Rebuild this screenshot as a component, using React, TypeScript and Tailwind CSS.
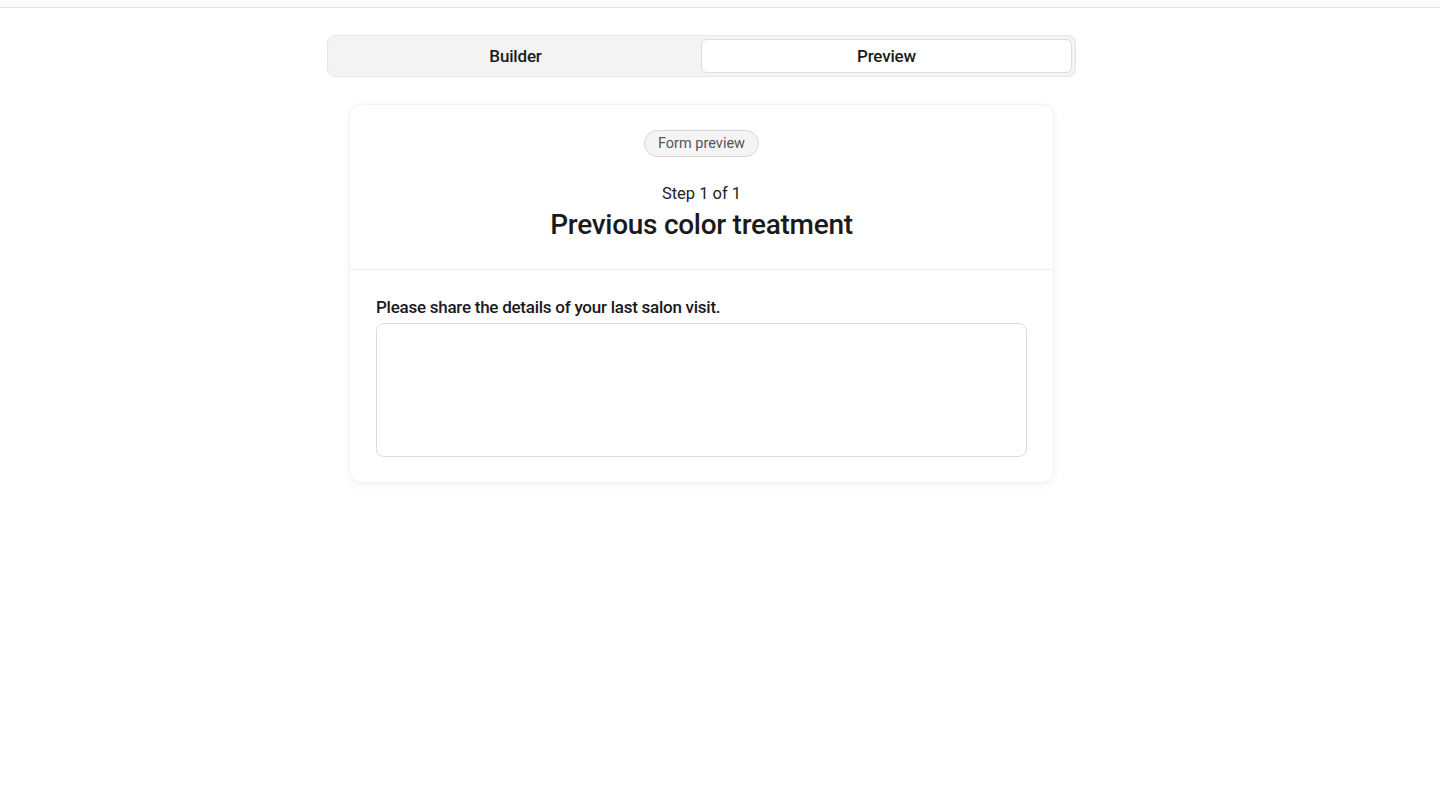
export default function App() {
  return (
    <div className="min-h-screen bg-white text-[#1a1a1a]" style={{ fontFamily: 'Roboto, "Liberation Sans", sans-serif' }}>
      <div className="h-[8px] border-b border-[#e4e4e4] bg-[#fbfbfb]" />
      <div className="pr-[37px]">
        <div className="mx-auto w-[749px] pt-[27px]">
          {/* Tabs */}
          <div className="flex h-[42px] gap-[1px] rounded-lg border border-[#e6e6e6] bg-[#f3f3f3] p-[3px]">
            <button className="flex-1 rounded-md pt-[1px] text-[17px] font-medium tracking-[-0.01em] text-[#1a1a1a]">Builder</button>
            <button className="flex-1 rounded-md border border-[#dedede] bg-white pt-[1px] text-[17px] font-medium tracking-[-0.01em] text-[#1a1a1a]">Preview</button>
          </div>

          {/* Form card */}
          <div className="mx-auto mt-[27px] w-[705px] rounded-xl border border-[#f3f3f3] bg-white shadow-[0_2px_8px_rgba(0,0,0,0.06)]">
            <div className="flex flex-col items-center border-b border-[#ececec] pb-[26px] pt-[25px]">
              <span className="flex h-[27px] items-center rounded-full border border-[#d6d6d6] bg-[#f4f4f4] px-[13px] text-[14.5px] text-[#555]">Form preview</span>
              <div className="mt-[25px] text-[16.5px] leading-[24px] text-[#222]">Step 1 of 1</div>
              <h1 className="mt-[1px] text-[28px] font-medium leading-[36px] tracking-[-0.01em] text-[#1a1a1a]">Previous color treatment</h1>
            </div>
            <div className="px-[26px] pb-[25px] pt-[25px]">
              <label className="block text-[17px] font-medium leading-[24px] tracking-[-0.015em] text-[#1a1a1a]">Please share the details of your last salon visit.</label>
              <textarea className="mt-[4px] block h-[134px] w-full resize-none rounded-lg border border-[#dcdcdc] bg-white outline-none" />
            </div>
          </div>
        </div>
      </div>
    </div>
  );
}
